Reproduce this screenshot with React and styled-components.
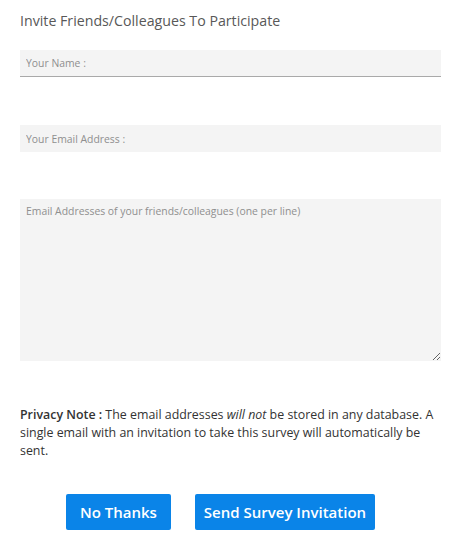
import React from "react";
import styled, { createGlobalStyle } from "styled-components";

const GlobalStyle = createGlobalStyle`
  body {
    margin: 0;
    background: #fff;
    font-family: "Open Sans", "Noto Sans", sans-serif;
  }
`;

const Wrapper = styled.div`
  width: 460px;
  padding: 12px 19px 0 20px;
  box-sizing: border-box;
`;

const Title = styled.h3`
  margin: 0 0 20px;
  font-size: 14.2px;
  font-weight: 400;
  color: #585858;
  line-height: 18px;
`;

const Field = styled.input`
  display: block;
  width: 100%;
  box-sizing: border-box;
  height: 27px;
  margin-bottom: ${(p) => p.$gap || 0}px;
  padding: 0 6px;
  border: none;
  border-bottom: ${(p) => (p.$underline ? "1px solid #a9a9a9" : "none")};
  background: #f4f4f4;
  font-family: inherit;
  font-size: 10.4px;
  color: #333;
  outline: none;
  &::placeholder {
    color: #8f8f8f;
  }
`;

const Area = styled.textarea`
  display: block;
  width: 100%;
  box-sizing: border-box;
  height: 162px;
  margin: 0 0 45px;
  padding: 5px 6px;
  border: none;
  background: #f4f4f4;
  font-family: inherit;
  font-size: 10.4px;
  color: #333;
  outline: none;
  resize: vertical;
  &::placeholder {
    color: #8f8f8f;
  }
`;

const Note = styled.p`
  margin: 0 0 34px;
  font-size: 12.4px;
  line-height: 18px;
  color: #333;
  b {
    font-weight: 600;
  }
`;

const Buttons = styled.div`
  display: flex;
  justify-content: center;
  gap: 24px;
  padding-right: 20px;
`;

const Button = styled.button`
  height: 36px;
  padding: 0 ${(p) => p.$pad || 14}px;
  border: none;
  border-radius: 2px;
  background: #0a84e8;
  color: #fff;
  font-family: inherit;
  font-size: 15px;
  font-weight: 600;
  cursor: pointer;
`;

export default function App() {
  return (
    <>
      <GlobalStyle />
      <Wrapper>
        <Title>Invite Friends/Colleagues To Participate</Title>
        <Field placeholder="Your Name :" $underline $gap={48} />
        <Field placeholder="Your Email Address :" $gap={47} />
        <Area placeholder="Email Addresses of your friends/colleagues (one per line)" />
        <Note>
          <b>Privacy Note :</b> The email addresses <i>will not</i> be stored in
          any database. A single email with an invitation to take this survey
          will automatically be sent.
        </Note>
        <Buttons>
          <Button>No Thanks</Button>
          <Button $pad={9}>Send Survey Invitation</Button>
        </Buttons>
      </Wrapper>
    </>
  );
}
